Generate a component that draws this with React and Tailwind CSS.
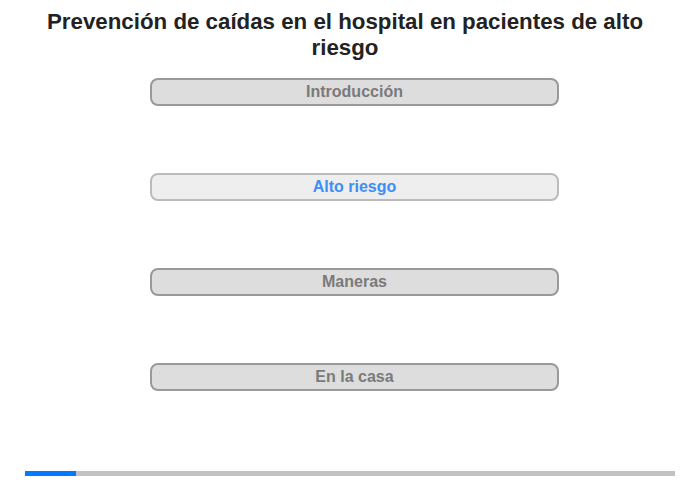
const sections = [
  { label: "Introducción", active: false },
  { label: "Alto riesgo", active: true },
  { label: "Maneras", active: false },
  { label: "En la casa", active: false },
];

const App = () => {
  const progress = 51;

  return (
    <div
      className="w-[700px] h-[480px] bg-white px-[25px] pt-[9px]"
      style={{ fontFamily: '"Liberation Sans", Arial, sans-serif' }}
    >
      <h1 className="pr-[10px] text-center text-[22.3px] leading-[26px] font-bold text-[#222]">
        Prevención de caídas en el hospital en pacientes de alto riesgo
      </h1>

      <div className="mt-[17px] w-[409px] mx-[125px] flex flex-col gap-[67px]">
        {sections.map((s) => (
          <button
            key={s.label}
            type="button"
            className={
              s.active
                ? "h-[28px] w-full rounded-[8px] border-2 border-[#bbb] bg-[#eee] text-[16px] font-bold text-[#3d8ef5] leading-[24px]"
                : "h-[28px] w-full rounded-[8px] border-2 border-[#999] bg-[#ddd] text-[16px] font-bold text-[#7a7a7a] leading-[24px]"
            }
          >
            {s.label}
          </button>
        ))}
      </div>

      <div className="mt-[80px] h-[5px] w-[650px] bg-[#c2c2c2] flex">
        <div className="h-full bg-[#007bff]" style={{ width: progress }} />
      </div>
    </div>
  );
};

export default App;
